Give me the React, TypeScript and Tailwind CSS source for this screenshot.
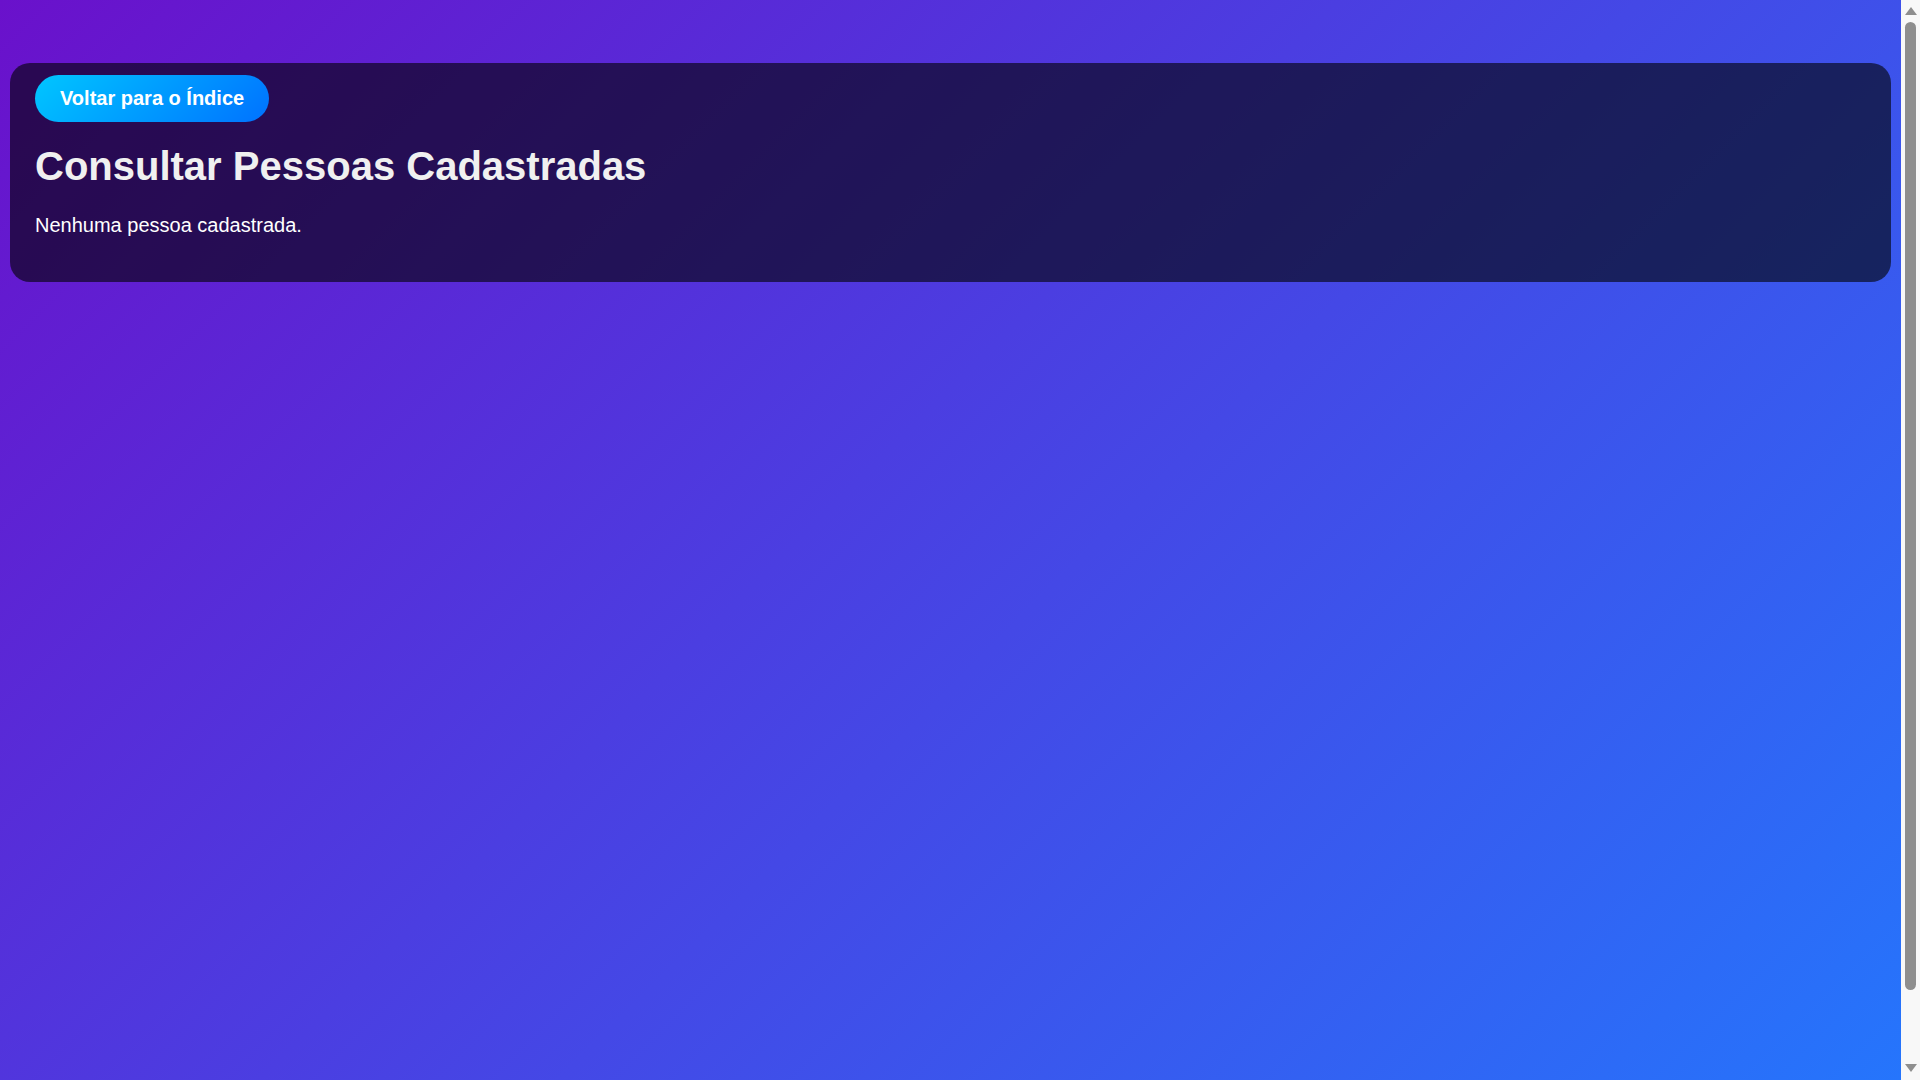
export default function App() {
  return (
    <div className="flex h-screen overflow-hidden font-['Liberation_Sans',Arial,sans-serif]">
      <main className="flex-1 bg-[linear-gradient(135deg,#6a11cb_0%,#2575fc_100%)] px-[10px] pt-[63px]">
        <div className="rounded-[20px] bg-black/60 px-[25px] pt-3 pb-[45px]">
          <button className="rounded-full bg-[linear-gradient(135deg,#00c6ff_0%,#0072ff_100%)] px-[25px] py-3 text-xl leading-[23px] font-bold text-white">
            Voltar para o Índice
          </button>
          <h1 className="mt-[21px] text-[40px] leading-[46px] font-bold text-[#f0f0f0]">
            Consultar Pessoas Cadastradas
          </h1>
          <p className="mt-[25px] text-xl leading-[23px] text-white">
            Nenhuma pessoa cadastrada.
          </p>
        </div>
      </main>
      {/* page scrollbar */}
      <div className="flex w-[19px] flex-col items-center bg-[#f8f8f8] pt-[7px] pb-[8px]">
        <div className="h-0 w-0 border-x-[6px] border-b-[8px] border-x-transparent border-b-[#8e8e8e]" />
        <div className="mt-[7px] h-[968px] w-[11px] rounded-full bg-[#8e8e8e]" />
        <div className="flex-1" />
        <div className="h-0 w-0 border-x-[6px] border-t-[8px] border-x-transparent border-t-[#8e8e8e]" />
      </div>
    </div>
  );
}
